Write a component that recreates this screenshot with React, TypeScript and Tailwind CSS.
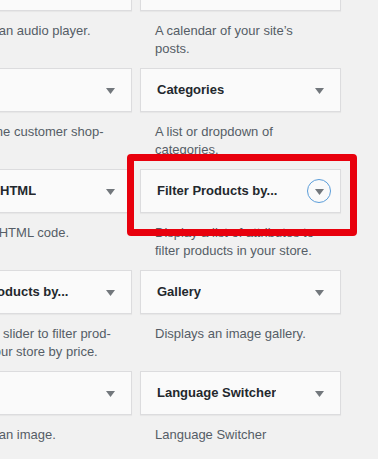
type Widget = {
  title: string;
  desc: string[];
  focused?: boolean;
};

// left column, right column, row by row
const widgets: Widget[] = [
  { title: "Audio", desc: ["Displays an audio player."] },
  { title: "Calendar", desc: ["A calendar of your site’s", "posts."] },
  { title: "Cart", desc: ["Display the customer shop-", "ping cart."] },
  { title: "Categories", desc: ["A list or dropdown of", "categories."] },
  { title: "Custom HTML", desc: ["Arbitrary HTML code."] },
  {
    title: "Filter Products by...",
    desc: ["Display a list of attributes to", "filter products in your store."],
    focused: true,
  },
  {
    title: "Filter Products by...",
    desc: ["Display a slider to filter prod-", "ucts in your store by price."],
  },
  { title: "Gallery", desc: ["Displays an image gallery."] },
  { title: "Image", desc: ["Displays an image."] },
  { title: "Language Switcher", desc: ["Language Switcher"] },
  { title: "Meta", desc: ["Login, RSS, & WordPress.org", "links."] },
  { title: "Navigation Menu", desc: ["Add a navigation menu to", "your sidebar."] },
];

function Arrow({ focused }: { focused?: boolean }) {
  return (
    <span
      className={
        focused
          ? "flex h-[24px] w-[24px] shrink-0 items-center justify-center rounded-full border-[1.5px] border-[#5b9dd9]"
          : "flex h-[24px] w-[24px] shrink-0 items-center justify-center"
      }
    >
      <svg width="9" height="6" viewBox="0 0 9 6" className="mt-[1px]">
        <path d="M0 0h9L4.5 6z" fill="#72777c" />
      </svg>
    </span>
  );
}

function WidgetCard({ w }: { w: Widget }) {
  return (
    <div>
      <div className="flex h-[44px] items-center justify-between border border-[#dcdcde] bg-[#fafafa] pl-[16px] pr-[9px] shadow-[0_1px_1px_rgba(0,0,0,0.04)]">
        <span className="truncate text-[13px] font-bold text-[#23282d]">{w.title}</span>
        <Arrow focused={w.focused} />
      </div>
      <p className="mt-[11px] mb-[10px] h-[36px] whitespace-nowrap px-[15px] text-[13px] leading-[18px] text-[#555d66]">
        {w.desc.map((line) => (
          <span key={line} className="block">
            {line}
          </span>
        ))}
      </p>
    </div>
  );
}

export default function App() {
  return (
    <div
      className="relative h-[459px] w-[378px] overflow-hidden bg-[#f1f1f1]"
      style={{ fontFamily: '"Liberation Sans", Arial, sans-serif' }}
    >
      <div className="-mt-[33px] -ml-[69px] grid grid-cols-[201px_201px] gap-x-[8px]">
        {widgets.map((w, i) => (
          <WidgetCard key={i} w={w} />
        ))}
      </div>

      {/* red highlight annotation */}
      <div className="pointer-events-none absolute left-[127px] top-[154px] h-[82px] w-[230px] rounded-[4px] border-[7px] border-[#e8000d]" />
    </div>
  );
}
